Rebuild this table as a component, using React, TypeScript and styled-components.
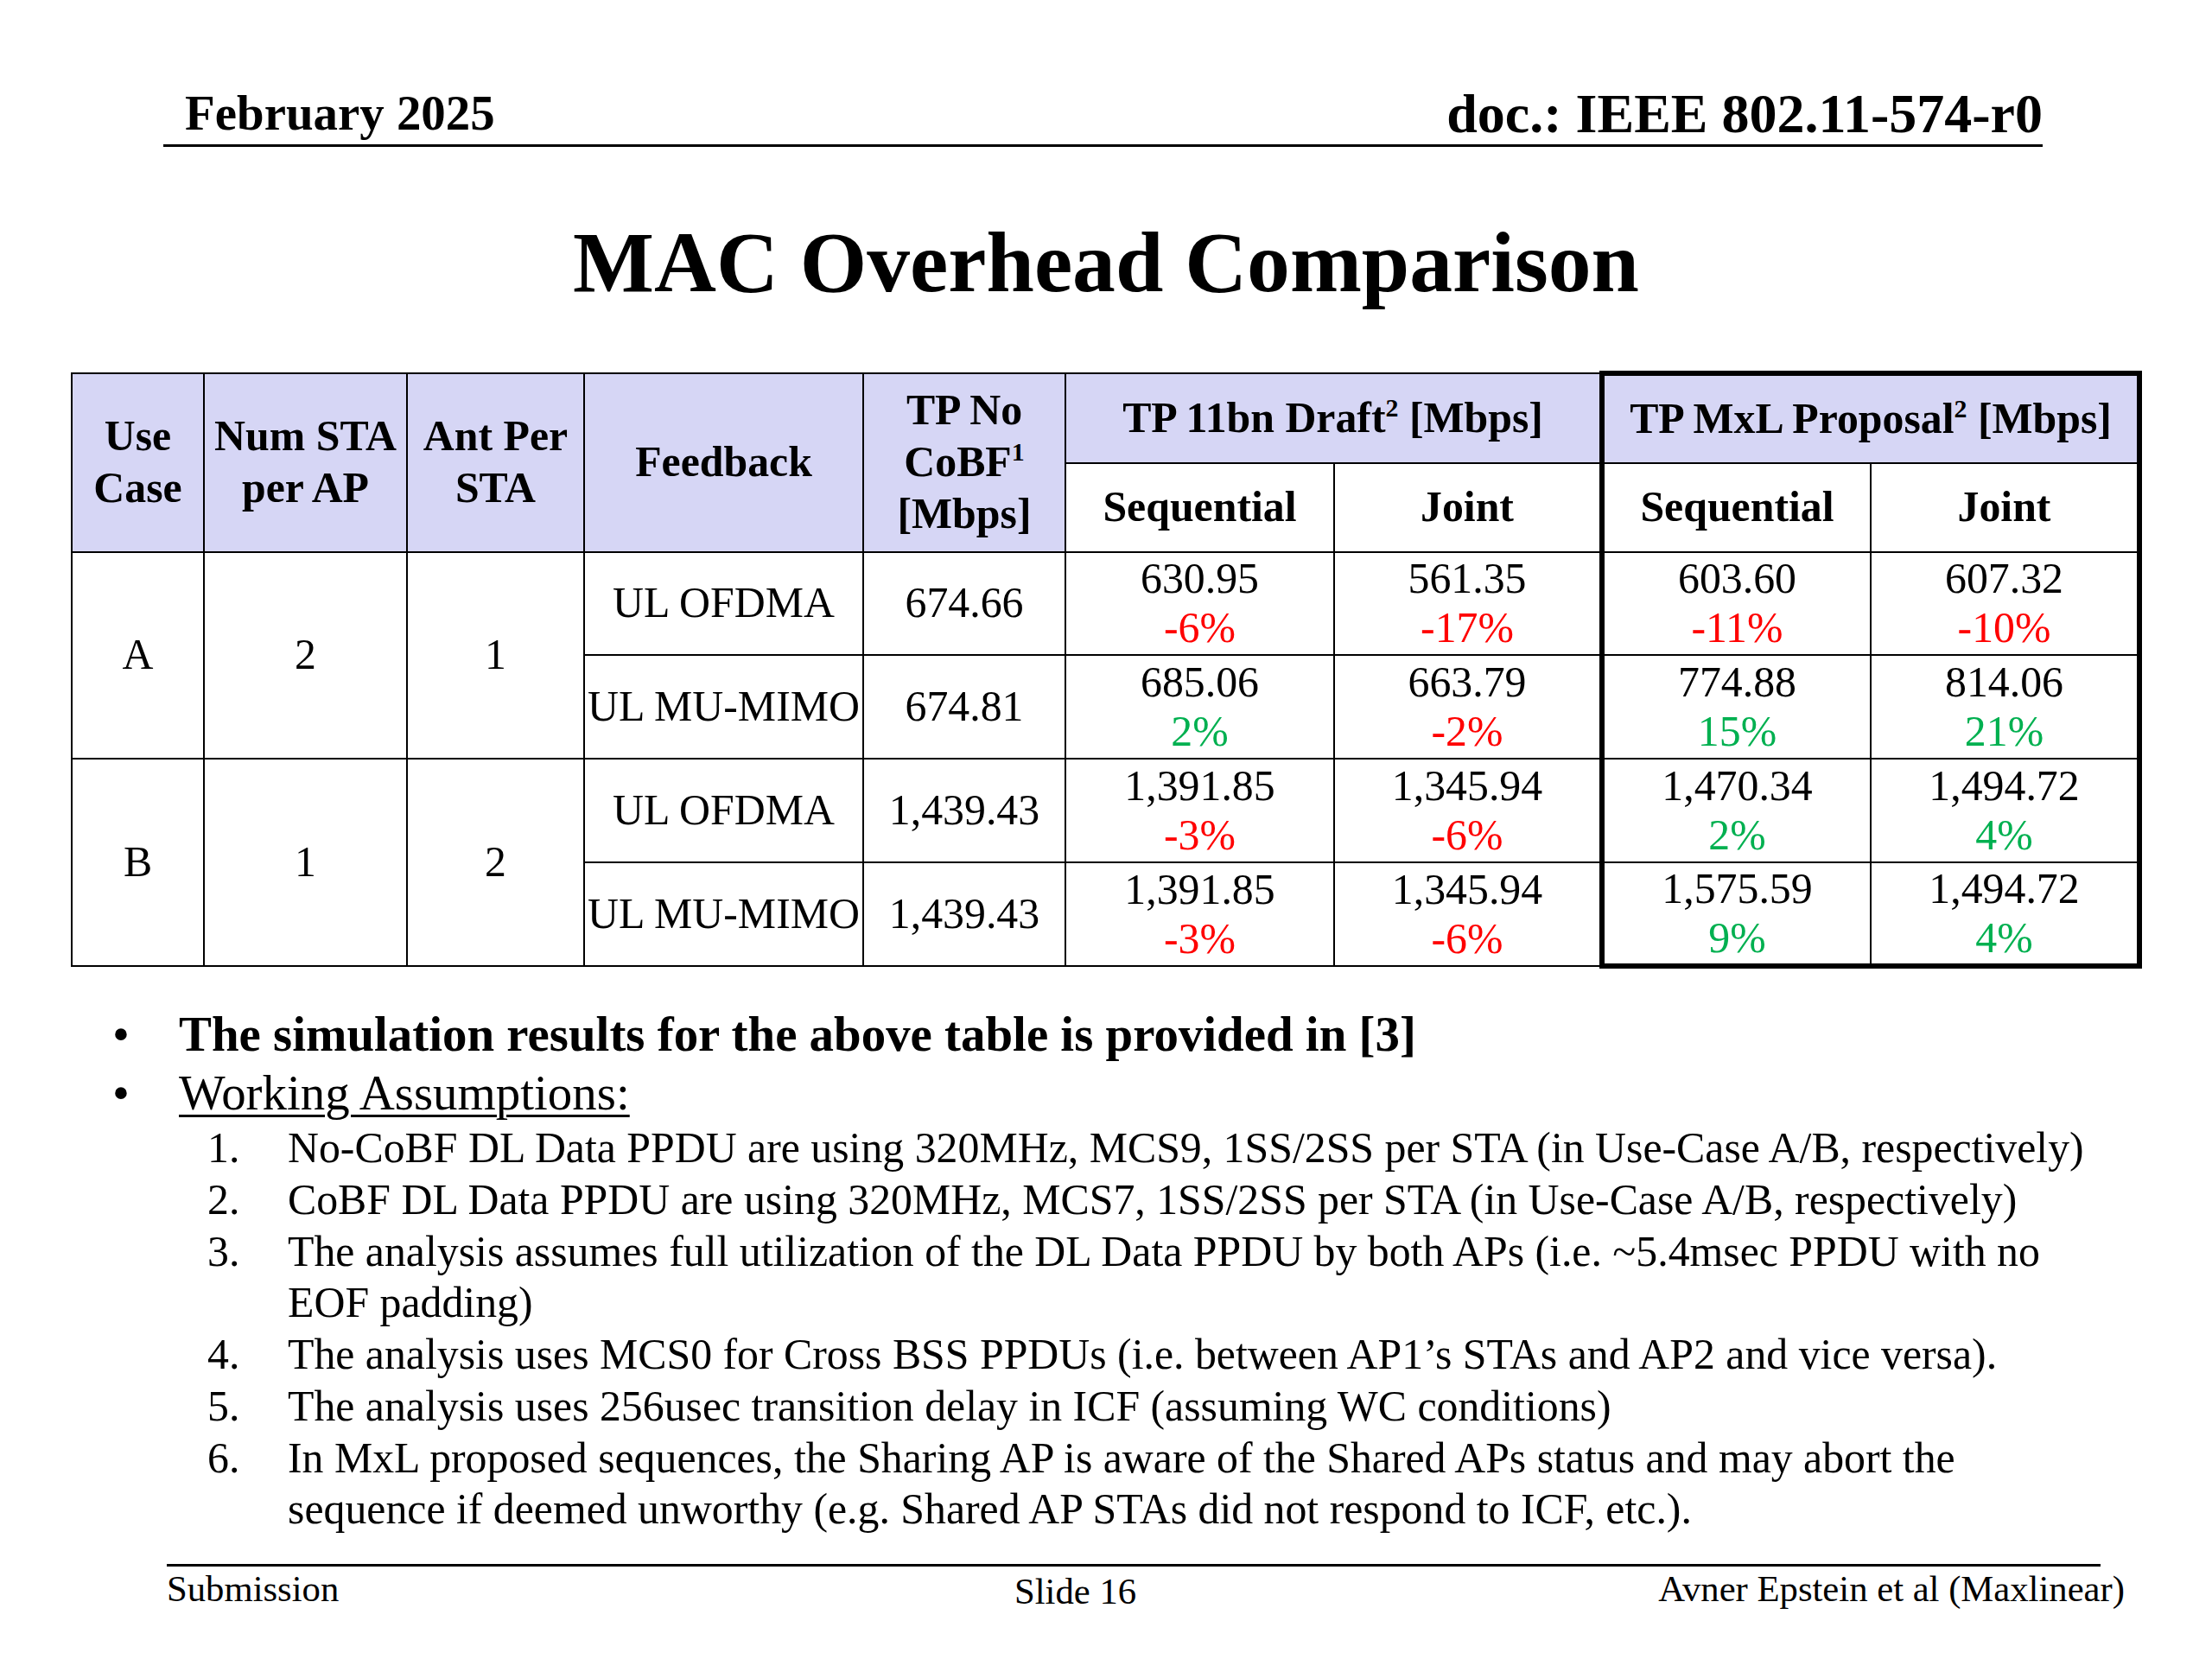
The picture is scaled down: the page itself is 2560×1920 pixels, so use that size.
import React from "react";
import styled, { createGlobalStyle, css } from "styled-components";

const GlobalStyle = createGlobalStyle`
  html, body {
    margin: 0;
    padding: 0;
    background: #ffffff;
  }
  body {
    font-family: "Liberation Serif", "Times New Roman", Times, serif;
    color: #000000;
  }
`;

const Slide = styled.div`
  width: 2560px;
  height: 1920px;
  box-sizing: border-box;
  display: flex;
  flex-direction: column;
  background: #ffffff;
  overflow: hidden;
`;

/* ---------- Header ---------- */
const Header = styled.header`
  box-sizing: border-box;
  height: 170px;
  margin: 0 196px 0 189px;
  padding: 0 0 3px 25px;
  border-bottom: 3px solid #000;
  display: flex;
  justify-content: space-between;
  align-items: flex-end;
  font-weight: bold;
  line-height: 1;
`;

const HeaderText = styled.div<{ $size: number; $lift: number }>`
  font-size: ${(p) => p.$size}px;
  padding-bottom: ${(p) => p.$lift}px;
  white-space: nowrap;
`;

/* ---------- Title ---------- */
const Title = styled.h1`
  margin: 84px 0 0;
  font-size: 99.6px;
  line-height: 1;
  font-weight: bold;
  text-align: center;
`;

/* ---------- Table ---------- */
const Table = styled.table`
  border-collapse: collapse;
  table-layout: fixed;
  width: 2397px;
  margin: 75px 0 0 82px;
  font-size: 49.8px;
  line-height: 1.2;
`;

const Col = styled.col<{ $w: number }>`
  width: ${(p) => p.$w}px;
`;

const Row = styled.tr<{ $h: number }>`
  height: ${(p) => p.$h}px;
`;

type Edges = {
  $thickLeft?: boolean;
  $thickRight?: boolean;
  $thickTop?: boolean;
  $thickBottom?: boolean;
};

const THICK = 6;

const edgeBorders = css<Edges>`
  border: 2px solid #000;
  ${(p) => p.$thickLeft && `border-left-width: ${THICK}px;`}
  ${(p) => p.$thickRight && `border-right-width: ${THICK}px;`}
  ${(p) => p.$thickTop && `border-top-width: ${THICK}px;`}
  ${(p) => p.$thickBottom && `border-bottom-width: ${THICK}px;`}
`;

const HeadCell = styled.th<Edges & { $plain?: boolean }>`
  ${edgeBorders}
  background: ${(p) => (p.$plain ? "#ffffff" : "#d6d6f5")};
  font-weight: bold;
  padding: 0;
  text-align: center;
  vertical-align: middle;
  white-space: nowrap;
`;

const Cell = styled.td<Edges>`
  ${edgeBorders}
  background: #ffffff;
  font-weight: normal;
  padding: 0;
  text-align: center;
  vertical-align: middle;
  white-space: nowrap;
`;

const Sup = styled.sup`
  font-size: 0.6em;
  line-height: 0;
  vertical-align: 0.6em;
`;

const Value = styled.div`
  line-height: 57px;
`;

const Delta = styled.div<{ $up: boolean }>`
  line-height: 57px;
  color: ${(p) => (p.$up ? "#00b050" : "#ff0000")};
`;

/* ---------- Notes ---------- */
const Notes = styled.ul`
  list-style: none;
  margin: 42px 0 0 130px;
  padding: 0;
  font-size: 56.9px;
  line-height: 1.2;
`;

const NoteItem = styled.li`
  display: grid;
  grid-template-columns: 77px 1fr;
`;

const BulletMark = styled.span``;

const NoteBody = styled.div``;

const StrongText = styled.span`
  font-weight: bold;
`;

const Underlined = styled.span`
  text-decoration: underline;
  text-decoration-thickness: 3px;
  text-underline-offset: 6px;
`;

const Steps = styled.ol`
  list-style: none;
  margin: 0 115px 0 33px;
  padding: 0;
  font-size: 49.8px;
  line-height: 1.2;
`;

const Step = styled.li`
  display: grid;
  grid-template-columns: 93px 1fr;
`;

const StepNum = styled.span``;
const StepText = styled.span``;

/* ---------- Footer ---------- */
const FooterRule = styled.div`
  margin: 33px 129px 0 193px;
  border-top: 3px solid #000;
`;

const FooterRow = styled.footer`
  display: grid;
  grid-template-columns: 981px auto 1fr;
  margin: 1px 101px 0 193px;
  font-size: 42.7px;
  line-height: 1.15;
`;

const FooterCell = styled.div<{ $align?: "left" | "right"; $drop?: number }>`
  text-align: ${(p) => p.$align ?? "left"};
  padding-top: ${(p) => p.$drop ?? 0}px;
  white-space: nowrap;
`;

/* ---------- Data ---------- */
type Pair = { v: string; d: string };
type DataRow = {
  feedback: string;
  noCobf: string;
  cells: [Pair, Pair, Pair, Pair];
};
type Group = { useCase: string; numSta: string; ant: string; rows: DataRow[] };

const groups: Group[] = [
  {
    useCase: "A",
    numSta: "2",
    ant: "1",
    rows: [
      {
        feedback: "UL OFDMA",
        noCobf: "674.66",
        cells: [
          { v: "630.95", d: "-6%" },
          { v: "561.35", d: "-17%" },
          { v: "603.60", d: "-11%" },
          { v: "607.32", d: "-10%" },
        ],
      },
      {
        feedback: "UL MU-MIMO",
        noCobf: "674.81",
        cells: [
          { v: "685.06", d: "2%" },
          { v: "663.79", d: "-2%" },
          { v: "774.88", d: "15%" },
          { v: "814.06", d: "21%" },
        ],
      },
    ],
  },
  {
    useCase: "B",
    numSta: "1",
    ant: "2",
    rows: [
      {
        feedback: "UL OFDMA",
        noCobf: "1,439.43",
        cells: [
          { v: "1,391.85", d: "-3%" },
          { v: "1,345.94", d: "-6%" },
          { v: "1,470.34", d: "2%" },
          { v: "1,494.72", d: "4%" },
        ],
      },
      {
        feedback: "UL MU-MIMO",
        noCobf: "1,439.43",
        cells: [
          { v: "1,391.85", d: "-3%" },
          { v: "1,345.94", d: "-6%" },
          { v: "1,575.59", d: "9%" },
          { v: "1,494.72", d: "4%" },
        ],
      },
    ],
  },
];

const colWidths = [153, 235, 205, 323, 234, 311, 310, 311, 311];
const rowHeights = [119, 120, 120, 120];

const steps: string[] = [
  "No-CoBF DL Data PPDU are using 320MHz, MCS9, 1SS/2SS per STA (in Use-Case A/B, respectively)",
  "CoBF DL Data PPDU are using 320MHz, MCS7, 1SS/2SS per STA (in Use-Case A/B, respectively)",
  "The analysis assumes full utilization of the DL Data PPDU by both APs (i.e. ~5.4msec PPDU with no EOF padding)",
  "The analysis uses MCS0 for Cross BSS PPDUs (i.e. between AP1\u2019s STAs and AP2 and vice versa).",
  "The analysis uses 256usec transition delay in ICF (assuming WC conditions)",
  "In MxL proposed sequences, the Sharing AP is aware of the Shared APs status and may abort the sequence if deemed unworthy (e.g. Shared AP STAs did not respond to ICF, etc.).",
];

const PairCell: React.FC<{ pair: Pair } & Edges> = ({ pair, ...edges }) => (
  <Cell {...edges}>
    <Value>{pair.v}</Value>
    <Delta $up={!pair.d.startsWith("-")}>{pair.d}</Delta>
  </Cell>
);

export default function App() {
  let rowIndex = 0;
  const totalRows = groups.reduce((n, g) => n + g.rows.length, 0);

  return (
    <>
      <GlobalStyle />
      <Slide>
        <Header>
          <HeaderText $size={56.9} $lift={4}>
            February 2025
          </HeaderText>
          <HeaderText $size={64} $lift={0}>
            doc.: IEEE 802.11-574-r0
          </HeaderText>
        </Header>

        <Title>MAC Overhead Comparison</Title>

        <Table>
          <colgroup>
            {colWidths.map((w, i) => (
              <Col key={i} $w={w} />
            ))}
          </colgroup>
          <thead>
            <Row $h={104}>
              <HeadCell rowSpan={2}>
                Use
                <br />
                Case
              </HeadCell>
              <HeadCell rowSpan={2}>
                Num STA
                <br />
                per AP
              </HeadCell>
              <HeadCell rowSpan={2}>
                Ant Per
                <br />
                STA
              </HeadCell>
              <HeadCell rowSpan={2}>Feedback</HeadCell>
              <HeadCell rowSpan={2}>
                TP No
                <br />
                CoBF<Sup>1</Sup>
                <br />
                [Mbps]
              </HeadCell>
              <HeadCell colSpan={2}>
                TP 11bn Draft<Sup>2</Sup> [Mbps]
              </HeadCell>
              <HeadCell colSpan={2} $thickTop $thickLeft $thickRight>
                TP MxL Proposal<Sup>2</Sup> [Mbps]
              </HeadCell>
            </Row>
            <Row $h={103}>
              <HeadCell $plain>Sequential</HeadCell>
              <HeadCell $plain>Joint</HeadCell>
              <HeadCell $plain $thickLeft>
                Sequential
              </HeadCell>
              <HeadCell $plain $thickRight>
                Joint
              </HeadCell>
            </Row>
          </thead>
          <tbody>
            {groups.map((g) =>
              g.rows.map((r, i) => {
                const idx = rowIndex++;
                const last = idx === totalRows - 1;
                return (
                  <Row key={`${g.useCase}-${i}`} $h={rowHeights[idx]}>
                    {i === 0 && (
                      <>
                        <Cell rowSpan={g.rows.length}>{g.useCase}</Cell>
                        <Cell rowSpan={g.rows.length}>{g.numSta}</Cell>
                        <Cell rowSpan={g.rows.length}>{g.ant}</Cell>
                      </>
                    )}
                    <Cell>{r.feedback}</Cell>
                    <Cell>{r.noCobf}</Cell>
                    <PairCell pair={r.cells[0]} />
                    <PairCell pair={r.cells[1]} />
                    <PairCell pair={r.cells[2]} $thickLeft $thickBottom={last} />
                    <PairCell pair={r.cells[3]} $thickRight $thickBottom={last} />
                  </Row>
                );
              })
            )}
          </tbody>
        </Table>

        <Notes>
          <NoteItem>
            <BulletMark>•</BulletMark>
            <NoteBody>
              <StrongText>
                The simulation results for the above table is provided in [3]
              </StrongText>
            </NoteBody>
          </NoteItem>
          <NoteItem>
            <BulletMark>•</BulletMark>
            <NoteBody>
              <Underlined>Working Assumptions:</Underlined>
              <Steps>
                {steps.map((s, i) => (
                  <Step key={i}>
                    <StepNum>{i + 1}.</StepNum>
                    <StepText>{s}</StepText>
                  </Step>
                ))}
              </Steps>
            </NoteBody>
          </NoteItem>
        </Notes>

        <FooterRule />
        <FooterRow>
          <FooterCell>Submission</FooterCell>
          <FooterCell $drop={3}>Slide 16</FooterCell>
          <FooterCell $align="right">Avner Epstein et al (Maxlinear)</FooterCell>
        </FooterRow>
      </Slide>
    </>
  );
}
